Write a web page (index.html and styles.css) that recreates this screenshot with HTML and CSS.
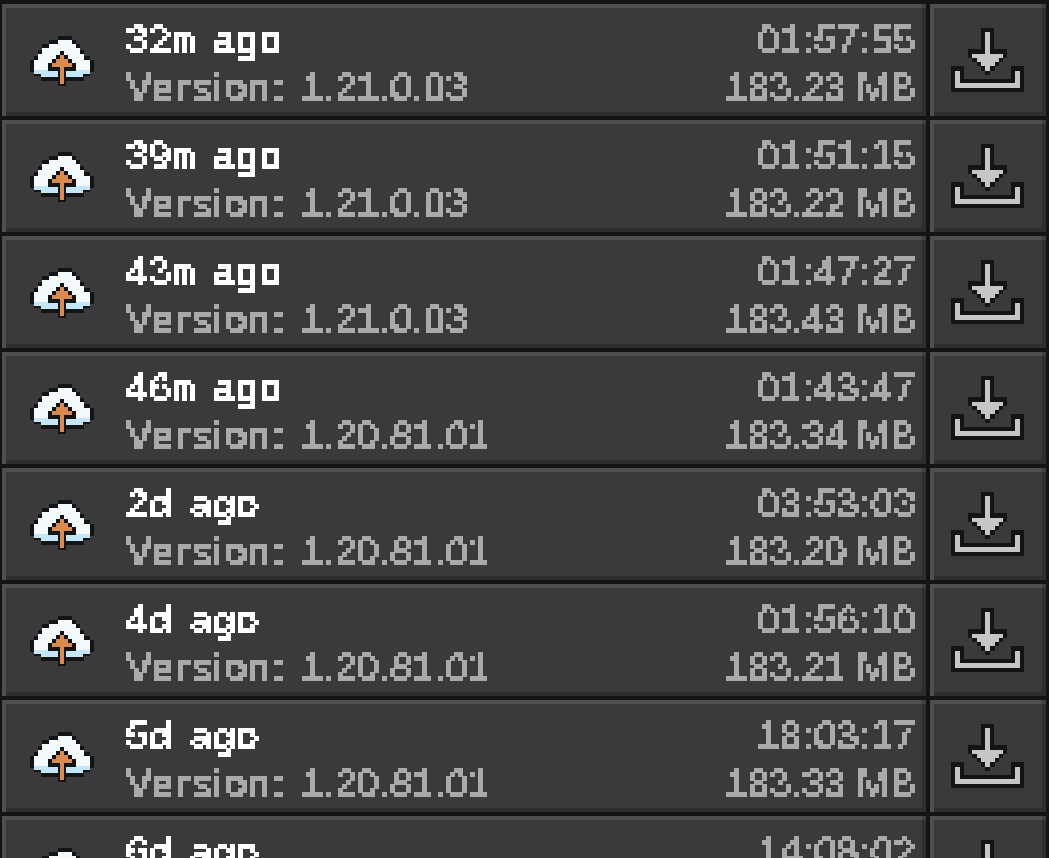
FILE: index.html
```html
<!doctype html>
<html>
<head>
<meta charset="utf-8">
<title>Backups</title>
<link rel="stylesheet" href="styles.css">
</head>

<body>
<svg class="defs" width="0" height="0">
	<filter id="pixel" x="0" y="0" width="100%" height="100%" color-interpolation-filters="sRGB">
		<feFlood x="2" y="2" width="1" height="1"></feFlood>
		<feComposite width="4" height="4"></feComposite>
		<feTile result="grid"></feTile>
		<feComposite in="SourceGraphic" in2="grid" operator="in"></feComposite>
		<feMorphology operator="dilate" radius="2"></feMorphology>
		<feComponentTransfer>
			<feFuncA type="discrete" tableValues="0 1 1 1"></feFuncA>
		</feComponentTransfer>
	</filter>
	<symbol id="cloud" viewBox="0 0 64 50">
		<path fill="#141414" d="M28 0H42V4H46V8H50V14H54V20H60V24H64V36H60V40H54V45H36V50H28V45H11V40H4V36H0V24H4V20H8V14H12V8H19V4H28Z"/>
		<path fill="#f4f9fc" d="M28 4H42V8H46V12H50V18H54V24H60V34H4V24H8V18H12V12H19V8H28Z"/>
		<path fill="#c4e6f6" d="M4 34H60V38H53V41H11V38H4Z"/>
		<path fill="#141414" d="M30 15H34V19H38V23H42V27H46V35H36V50H28V35H18V27H22V23H26V19H30Z"/>
		<path fill="#d98a50" d="M30 19H34V23H38V27H42V31H34V48H30V31H22V27H26V23H30Z"/>
	</symbol>
	<symbol id="download" viewBox="0 0 73 64">
		<path fill="#141414" d="M30 0H43V21H56V30H52V34H48V38H44V43H39V47H34V43H30V38H26V34H21V30H17V21H30Z"/>
		<path fill="#c6c6c6" d="M34 4H39V26H52V30H48V34H44V38H39V43H34V38H30V34H26V30H21V26H34Z"/>
		<path fill="#141414" d="M0 38H13V51H60V38H73V64H0Z"/>
		<path fill="#c6c6c6" d="M4 43H9V55H64V43H69V60H4Z"/>
	</symbol>
</svg>

<div class="list">
	<div class="row">
		<div class="main">
			<svg class="cloud"><use href="#cloud"></use></svg>
			<div class="info">
				<div class="line"><span class="when">32<span class="min">m</span> ago</span><span class="time">01:57:55</span></div>
				<div class="line"><span class="ver"><span class="label">Version:</span> 1.21.0.03</span><span class="size">183.23 MB</span></div>
			</div>
		</div>
		<div class="btn"><svg class="down"><use href="#download"></use></svg></div>
	</div>
	<div class="row">
		<div class="main">
			<svg class="cloud"><use href="#cloud"></use></svg>
			<div class="info">
				<div class="line"><span class="when">39<span class="min">m</span> ago</span><span class="time">01:51:15</span></div>
				<div class="line"><span class="ver"><span class="label">Version:</span> 1.21.0.03</span><span class="size">183.22 MB</span></div>
			</div>
		</div>
		<div class="btn"><svg class="down"><use href="#download"></use></svg></div>
	</div>
	<div class="row">
		<div class="main">
			<svg class="cloud"><use href="#cloud"></use></svg>
			<div class="info">
				<div class="line"><span class="when">43<span class="min">m</span> ago</span><span class="time">01:47:27</span></div>
				<div class="line"><span class="ver"><span class="label">Version:</span> 1.21.0.03</span><span class="size">183.43 MB</span></div>
			</div>
		</div>
		<div class="btn"><svg class="down"><use href="#download"></use></svg></div>
	</div>
	<div class="row">
		<div class="main">
			<svg class="cloud"><use href="#cloud"></use></svg>
			<div class="info">
				<div class="line"><span class="when">46<span class="min">m</span> ago</span><span class="time">01:43:47</span></div>
				<div class="line"><span class="ver"><span class="label">Version:</span> 1.20.81.01</span><span class="size">183.34 MB</span></div>
			</div>
		</div>
		<div class="btn"><svg class="down"><use href="#download"></use></svg></div>
	</div>
	<div class="row">
		<div class="main">
			<svg class="cloud"><use href="#cloud"></use></svg>
			<div class="info">
				<div class="line"><span class="when">2d ago</span><span class="time">03:53:03</span></div>
				<div class="line"><span class="ver"><span class="label">Version:</span> 1.20.81.01</span><span class="size">183.20 MB</span></div>
			</div>
		</div>
		<div class="btn"><svg class="down"><use href="#download"></use></svg></div>
	</div>
	<div class="row">
		<div class="main">
			<svg class="cloud"><use href="#cloud"></use></svg>
			<div class="info">
				<div class="line"><span class="when">4d ago</span><span class="time">01:56:10</span></div>
				<div class="line"><span class="ver"><span class="label">Version:</span> 1.20.81.01</span><span class="size">183.21 MB</span></div>
			</div>
		</div>
		<div class="btn"><svg class="down"><use href="#download"></use></svg></div>
	</div>
	<div class="row">
		<div class="main">
			<svg class="cloud"><use href="#cloud"></use></svg>
			<div class="info">
				<div class="line"><span class="when">5d ago</span><span class="time">18:03:17</span></div>
				<div class="line"><span class="ver"><span class="label">Version:</span> 1.20.81.01</span><span class="size">183.33 MB</span></div>
			</div>
		</div>
		<div class="btn"><svg class="down"><use href="#download"></use></svg></div>
	</div>
	<div class="row">
		<div class="main">
			<svg class="cloud"><use href="#cloud"></use></svg>
			<div class="info">
				<div class="line"><span class="when">6d ago</span><span class="time">14:08:02</span></div>
			</div>
		</div>
		<div class="btn"><svg class="down"><use href="#download"></use></svg></div>
	</div>
</div>
</body>
</html>
```

FILE: styles.css
```css
*{ margin:0; padding:0; box-sizing:border-box;}
html,body{ height:100%; overflow:hidden;}
body{ background:#141414; font-family:"Liberation Sans",Arial,sans-serif; font-size:39px;}
.defs{ position:absolute;}

.list{ display:flex; flex-direction:column; gap:4px; padding:4px 3px 0 2px;}
.row{ display:flex; gap:4px; height:112px; flex-shrink:0;}

.main,.btn{ position:relative; background:#3a3a3a; box-shadow:inset 4px 4px 0 #4f4f4f,inset -4px -4px 0 #2e2e2e;}
.main::after,.btn::after{ content:""; position:absolute; right:0; top:0; width:4px; height:4px; background:#3f3f3f;}
.main{ flex:1; display:flex; align-items:flex-start; padding:32px 10px 0 28px; gap:32px;}
.btn{ width:116px; display:flex; justify-content:center; padding:24px 1px 0 0;}

.cloud{ width:64px; height:50px; flex-shrink:0; shape-rendering:crispEdges;}
.down{ width:73px; height:64px; shape-rendering:crispEdges;}

.info{ flex:1; margin-top:-20px; filter:url(#pixel);}
.line{ display:flex; justify-content:space-between; height:48px; line-height:48px; white-space:nowrap;}
.when{ color:#fff; letter-spacing:1.6px; word-spacing:5px;}
.min{ display:inline-block; transform:scaleX(.66); transform-origin:left; margin-right:-11px;}
.ver{ color:#aaa; letter-spacing:.42px; word-spacing:4px;}
.label{ letter-spacing:2.4px;}
.time{ color:#aaa; letter-spacing:.85px;}
.size{ color:#aaa; letter-spacing:.2px;}
```
